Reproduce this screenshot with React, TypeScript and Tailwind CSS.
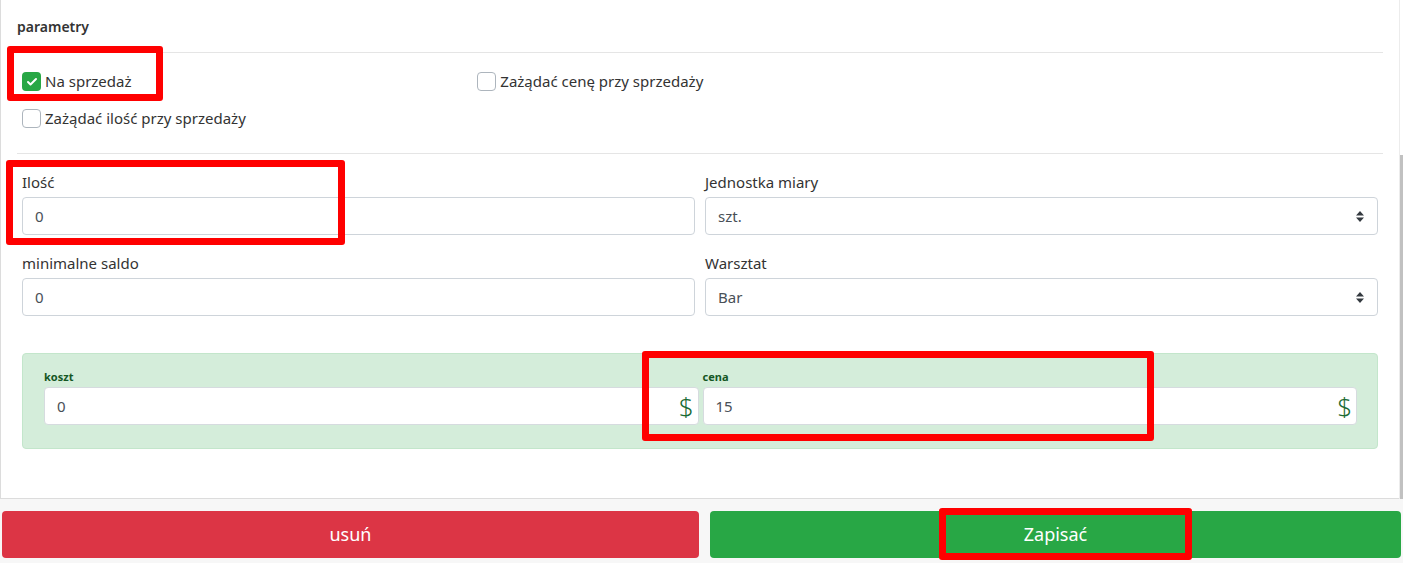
import { Check } from 'lucide-react';

const FONT = "font-['Noto_Sans','Open_Sans',sans-serif]";

function Box({ checked, label }: { checked?: boolean; label: string }) {
  return (
    <div className="flex h-[37px] items-center px-[5px]">
      <span
        className={
          checked
            ? 'flex h-[19px] w-[19px] items-center justify-center rounded-[4px] bg-[#28a745]'
            : 'h-[19px] w-[19px] rounded-[4px] border border-[#adb5bd] bg-white'
        }
      >
        {checked && <Check size={12} strokeWidth={4} className="text-white" />}
      </span>
      <span className="ml-[4px] text-[15px] text-[#333]">{label}</span>
    </div>
  );
}

function Field({ label, value, select }: { label: string; value: string; select?: boolean }) {
  return (
    <div className="px-[5px] pt-[17px]">
      <div className="mb-[4px] text-[15px] leading-[22px] text-[#333]">{label}</div>
      <div className="flex h-[38px] items-center justify-between rounded-[4px] border border-[#ced4da] bg-white px-[12px]">
        <span className="text-[15px] text-[#495057]">{value}</span>
        {select && (
          <svg width="8" height="11" viewBox="0 0 8 11" className="mr-[1px]">
            <path d="M4 0 L8 4.5 H0 Z M4 11 L0 6.5 H8 Z" fill="#343a40" />
          </svg>
        )}
      </div>
    </div>
  );
}

function Money({ label, value }: { label: string; value: string }) {
  return (
    <div>
      <div className="mb-[2px] text-[11px] font-bold leading-[16px] text-[#155724]">{label}</div>
      <div className="flex h-[38px] items-center justify-between rounded-[4px] border border-[#d6dbdf] bg-white pl-[12px] pr-[4px]">
        <span className="text-[15px] text-[#495057]">{value}</span>
        <span className="text-[26px] font-light leading-none text-[#1a6b33]">$</span>
      </div>
    </div>
  );
}

export default function App() {
  return (
    <div className={`relative h-[563px] w-[1403px] overflow-hidden bg-[#f7f7f7] ${FONT}`}>
      <div className="flex">
        <div className="h-[499px] w-[1399px] border-b border-l border-[#dcdcdc] bg-white px-4">
          <div className="flex h-[52px] items-center text-[14px] font-semibold text-[#333]">parametry</div>
          <div className="border-t border-[#e5e5e5]" />
          <div className="grid grid-cols-3 pb-[16px] pt-[10px]">
            <Box checked label="Na sprzedaż" />
            <Box label="Zażądać cenę przy sprzedaży" />
            <div />
            <Box label="Zażądać ilość przy sprzedaży" />
          </div>
          <div className="border-t border-[#e5e5e5]" />
          <div className="grid grid-cols-2">
            <Field label="Ilość" value="0" />
            <Field label="Jednostka miary" value="szt." select />
            <Field label="minimalne saldo" value="0" />
            <Field label="Warsztat" value="Bar" select />
          </div>
          <div className="mx-[5px] mt-[37px] rounded-[4px] border border-[#c3e6cb] bg-[#d4edda] pb-[23px] pl-[21px] pr-[20px] pt-[15px]">
            <div className="grid grid-cols-2 gap-[4px]">
              <Money label="koszt" value="0" />
              <Money label="cena" value="15" />
            </div>
          </div>
        </div>
        <div className="flex h-[499px] w-[4px] flex-col border-l border-[#ececec] bg-white">
          <div className="h-[155px]" />
          <div className="flex-1 bg-[#c1c1c1]" />
        </div>
      </div>
      <div className="mt-[12px] flex h-[47px] gap-[11px] px-[2px]">
        <button className="w-[697px] rounded-[4px] bg-[#dc3545] text-[18px] text-white">usuń</button>
        <button className="flex-1 rounded-[4px] bg-[#28a745] text-[18px] text-white">Zapisać</button>
      </div>

      {/* annotation boxes */}
      <div className="absolute left-[7px] top-[46px] h-[55px] w-[156px] rounded-[3px] border-[7px] border-[#ff0000]" />
      <div className="absolute left-[6px] top-[160px] h-[85px] w-[339px] rounded-[3px] border-[7px] border-[#ff0000]" />
      <div className="absolute left-[642px] top-[351px] h-[90px] w-[512px] rounded-[3px] border-[7px] border-[#ff0000]" />
      <div className="absolute left-[939px] top-[508px] h-[52px] w-[253px] rounded-[3px] border-[7px] border-[#ff0000]" />
    </div>
  );
}
